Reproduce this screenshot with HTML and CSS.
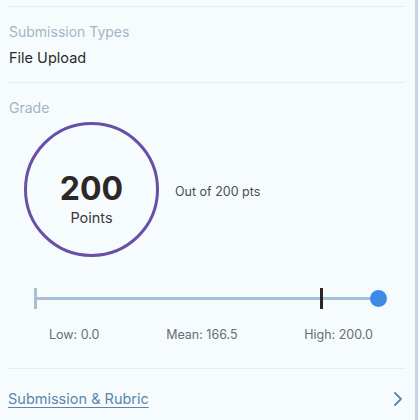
FILE: index.html
```html
<!DOCTYPE html>
<html lang="en">
<head>
  <meta charset="UTF-8" />
  <meta name="viewport" content="width=device-width, initial-scale=1.0"/>
  <title>Assignment Details</title>
  <link rel="stylesheet" href="styles.css">
</head>
<body>
  <div class="page">
    <div class="content">
      <div class="divider top"></div>

      <div class="section types">
        <div class="label">Submission Types</div>
        <div class="value">File Upload</div>
      </div>

      <div class="divider"></div>

      <div class="section grade">
        <div class="label">Grade</div>
        <div class="grade-row">
          <div class="circle">
            <div class="score">200</div>
            <div class="score-unit">Points</div>
          </div>
          <div class="out-of">Out of 200 pts</div>
        </div>

        <div class="slider">
          <div class="track">
            <span class="tick low"></span>
            <span class="tick mean" style="left: 83.25%;"></span>
            <span class="dot" style="left: 100%;"></span>
          </div>
        </div>
        <div class="stats">
          <span>Low: 0.0</span>
          <span>Mean: 166.5</span>
          <span>High: 200.0</span>
        </div>
      </div>

      <div class="divider"></div>

      <a class="link-row" href="#">
        <span class="link">Submission &amp; Rubric</span>
        <svg class="chevron" width="10" height="16" viewBox="0 0 10 16">
          <path d="M2 2 L8 8 L2 14" fill="none" stroke="#5b86aa" stroke-width="1.8" stroke-linecap="round" stroke-linejoin="round"/>
        </svg>
      </a>
    </div>
    <div class="scrollbar"></div>
  </div>
</body>
</html>
```

FILE: styles.css
```css
body { margin: 0; background: #f6fcfd; font-family: Inter, "Liberation Sans", sans-serif; }
.page { display: flex; height: 420px; }
.content { width: 397px; margin-left: 8px; }
.scrollbar { width: 3px; margin-left: 10px; background: #c7d6e4; }

.divider { height: 1px; background: #e6edef; }
.divider.top { margin-top: 6px; }

.section { padding: 16px 0 0 1px; }
.types { padding-bottom: 15px; }
.label { font-size: 14px; color: #a2b5c5; line-height: 18px; }
.value { font-size: 14.5px; color: #2a2a2a; line-height: 18px; margin-top: 8px; }

.grade { padding-bottom: 26px; }
.grade-row { display: flex; align-items: center; margin-top: 5px; }
.circle {
  width: 129px; height: 129px; margin-left: 15px;
  border: 3px solid #6a4fa6; border-radius: 50%;
  display: flex; flex-direction: column; align-items: center;
}
.score { font-size: 32px; font-weight: 700; color: #2d2727; line-height: 36px; margin-top: 46px; }
.score-unit { font-size: 14.5px; color: #3a3a3a; line-height: 18px; margin-top: 2px; }
.out-of { font-size: 12.5px; color: #4b4f53; margin-left: 16px; margin-top: 3px; }

.slider { padding: 40px 27px 0 26px; }
.track { position: relative; height: 3px; background: #a8c0d6; }
.tick { position: absolute; top: -9px; width: 3px; height: 21px; }
.tick.low { left: -1px; background: #a8c0d6; }
.tick.mean { margin-left: -1px; background: #2e2424; }
.dot {
  position: absolute; top: -7px; margin-left: -8px;
  width: 17px; height: 17px; border-radius: 50%; background: #3f8ae6;
}

.stats {
  display: flex; justify-content: space-between;
  padding: 27px 32px 0 40px;
  font-size: 12.5px; color: #686d72;
}

.link-row {
  display: flex; align-items: center; justify-content: space-between;
  padding: 21px 2px 0 0; text-decoration: none;
}
.link { font-size: 14.5px; color: #5b86aa; text-decoration: underline; text-underline-offset: 3px; }
```
